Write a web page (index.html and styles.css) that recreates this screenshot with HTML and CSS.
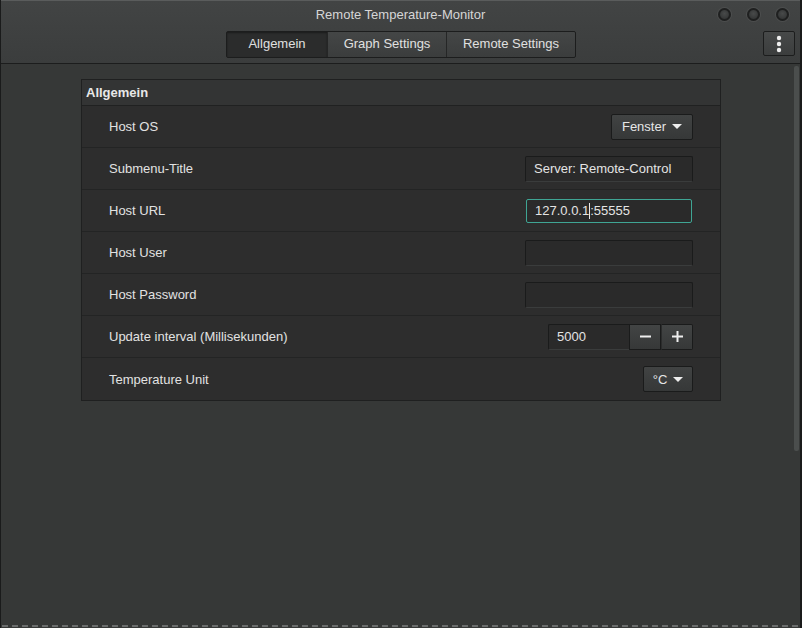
FILE: index.html
```html
<!DOCTYPE html>
<html>
<head>
<meta charset="utf-8">
<link rel="stylesheet" href="styles.css">
</head>
<body>
<div class="window">
  <header class="headerbar">
    <div class="title-row">
      <div class="title">Remote Temperature-Monitor</div>
      <div class="wm-buttons">
        <span class="wm-btn"></span><span class="wm-btn"></span><span class="wm-btn"></span>
      </div>
    </div>
    <div class="switch-row">
      <div class="switcher">
        <div class="tab tab-active t1">Allgemein</div>
        <div class="tab t2">Graph Settings</div>
        <div class="tab t3">Remote Settings</div>
      </div>
      <div class="menu-btn">
        <svg width="6" height="18" viewBox="0 0 6 18"><circle cx="3" cy="3" r="2.2" fill="#eee"/><circle cx="3" cy="9" r="2.2" fill="#eee"/><circle cx="3" cy="15" r="2.2" fill="#eee"/></svg>
      </div>
    </div>
  </header>
  <main class="content">
    <section class="panel">
      <div class="panel-head">Allgemein</div>
      <div class="row"><span class="label">Host OS</span><div class="btn combo combo-os">Fenster <span class="arrow"></span></div></div>
      <div class="row"><span class="label">Submenu-Title</span><div class="entry">Server: Remote-Control</div></div>
      <div class="row"><span class="label">Host URL</span><div class="entry focus">127.0.0.1<span class="caret"></span>:55555</div></div>
      <div class="row"><span class="label">Host User</span><div class="entry"></div></div>
      <div class="row"><span class="label">Host Password</span><div class="entry"></div></div>
      <div class="row"><span class="label">Update interval (Millisekunden)</span>
        <div class="spin"><div class="spin-entry">5000</div><div class="spin-btn">
          <svg width="11" height="11" viewBox="0 0 11 11"><rect x="0" y="4.5" width="11" height="2" fill="#eee"/></svg></div><div class="spin-btn">
          <svg width="11" height="11" viewBox="0 0 11 11"><rect x="0" y="4.5" width="11" height="2" fill="#eee"/><rect x="4.5" y="0" width="2" height="11" fill="#eee"/></svg></div></div>
      </div>
      <div class="row"><span class="label">Temperature Unit</span><div class="btn combo combo-unit">°C <span class="arrow"></span></div></div>
    </section>
  </main>
  <div class="scrollbar"></div>
  <div class="bottom-edge"></div>
</div>
</body>
</html>
```
FILE: styles.css
```css
* { box-sizing: border-box; }
html, body { margin: 0; padding: 0; background: #363837; }
body { font-family: "Liberation Sans", Arial, sans-serif; font-size: 13px; color: #e2e2e2; }

.window {
  position: relative;
  width: 802px;
  height: 628px;
  display: flex;
  flex-direction: column;
  border-left: 1px solid #1a1b1b;
  border-right: 2px solid #1a1b1b;
  background: #363837;
  overflow: hidden;
}

.headerbar {
  height: 64px;
  background: linear-gradient(#424444, #3b3d3d);
  border-top: 1px solid #5a5c5c;
  border-bottom: 1px solid #1c1d1d;
  display: flex;
  flex-direction: column;
}
.title-row {
  height: 26px;
  display: flex;
  align-items: center;
  justify-content: center;
  position: relative;
}
.title { color: #d6d6d6; font-size: 13px; margin-top: 1px; }
.wm-buttons {
  position: absolute;
  right: 11px;
  top: 7px;
  display: flex;
  gap: 16px;
}
.wm-btn {
  width: 13px; height: 13px;
  border-radius: 50%;
  background: radial-gradient(circle at 50% 40%, #484a4a, #2e3030);
  border: 2px solid #1f2020;
  box-shadow: 0 0 0 1px #4c4e4e;
}

.switch-row {
  height: 36px;
  display: flex;
  align-items: flex-start;
  position: relative;
  padding-top: 4px;
}
.switcher {
  margin-left: 225px;
  display: flex;
  height: 27px;
  border: 1px solid #1c1d1d;
  border-radius: 2px;
  background: linear-gradient(#444646, #3b3d3d);
}
.tab {
  display: flex;
  align-items: center;
  justify-content: center;
  color: #e0e0e0;
  font-size: 13px;
  border-left: 1px solid #252626;
  padding-bottom: 2px;
}
.tab.t1 { width: 100px; border-left: none; }
.tab.t2 { width: 119px; }
.tab.t3 { width: 129px; }
.tab-active {
  background: #2b2c2c;
  box-shadow: inset 0 1px 2px rgba(0,0,0,0.4);
}
.menu-btn {
  position: absolute;
  right: 5px;
  top: 4px;
  width: 32px;
  height: 25px;
  border: 1px solid #1c1d1d;
  border-radius: 2px;
  background: linear-gradient(#474949, #3b3d3d);
  display: flex;
  align-items: center;
  justify-content: center;
}

.content {
  flex: 1;
  padding: 15px 0 0 80px;
}
.panel {
  width: 640px;
  border: 1px solid #1f2020;
  background: #2d2d2d;
}
.panel-head {
  height: 26px;
  background: #333434;
  border-bottom: 1px solid #202121;
  font-weight: bold;
  color: #e8e8e8;
  padding-left: 4px;
  display: flex;
  align-items: center;
}
.row {
  height: 42px;
  display: flex;
  align-items: center;
  justify-content: space-between;
  padding: 0 27px 0 27px;
  border-bottom: 1px solid #232424;
}
.row:last-child { border-bottom: none; }
.label { color: #e2e2e2; }

.btn {
  height: 26px;
  border: 1px solid #1a1b1b;
  border-radius: 2px;
  background: linear-gradient(#414343, #363838);
  display: flex;
  align-items: center;
  color: #e6e6e6;
}
.combo { justify-content: center; gap: 6px; }
.combo-os { width: 82px; margin-right: 0; }
.combo-unit { width: 50px; }
.arrow {
  width: 0; height: 0;
  border-left: 5px solid transparent;
  border-right: 5px solid transparent;
  border-top: 5px solid #eeeeee;
}

.entry {
  width: 168px;
  height: 26px;
  background: #2a2a2a;
  border: 1px solid #1a1b1b;
  border-bottom-color: #3a3c3c;
  border-radius: 2px;
  padding-left: 8px;
  display: flex;
  align-items: center;
  color: #e4e4e4;
}
.entry.focus {
  border: 1px solid #3fa594;
  width: 166px;
  height: 24px;
  margin-right: 1px;
}
.caret {
  display: inline-block;
  width: 1px;
  height: 16px;
  background: #e8e8e8;
}

.spin {
  display: flex;
  height: 26px;
}
.spin-entry {
  width: 81px;
  background: #2a2a2a;
  border: 1px solid #1a1b1b;
  border-right: none;
  border-bottom-color: #3a3c3c;
  border-radius: 2px 0 0 2px;
  padding-left: 8px;
  display: flex;
  align-items: center;
  color: #e4e4e4;
}
.spin-btn {
  width: 32px;
  border: 1px solid #1a1b1b;
  background: linear-gradient(#424444, #363838);
  display: flex;
  align-items: center;
  justify-content: center;
}
.spin-btn + .spin-btn { border-left: 1px solid #2b2c2c; border-radius: 0 2px 2px 0; }

.scrollbar {
  position: absolute;
  right: 1px;
  top: 66px;
  width: 5px;
  height: 385px;
  background: #4b4e4d;
  border-radius: 2px;
}
.bottom-edge {
  position: absolute;
  left: 0; right: 0; bottom: 1px;
  height: 2px;
  background: repeating-linear-gradient(90deg, #6a6c6c 0 6px, transparent 6px 10px);
  background-position: 1px 0;
}
```
